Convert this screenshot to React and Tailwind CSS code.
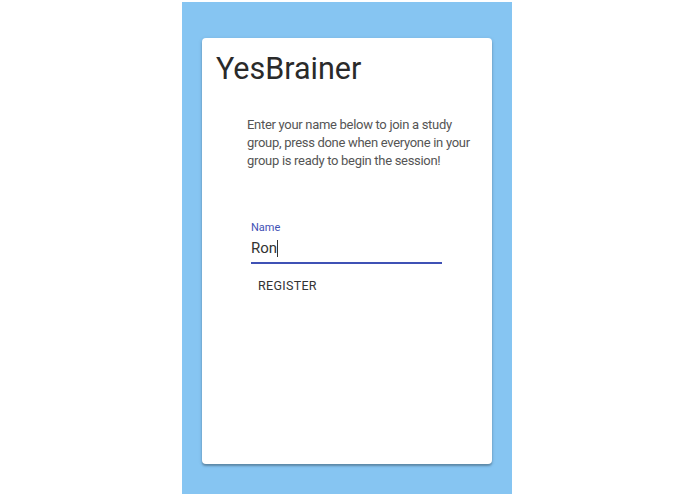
export default function App() {
  return (
    <div className="w-[695px] h-[494px] bg-white pl-[182px]" style={{ fontFamily: 'Roboto, "Liberation Sans", sans-serif' }}>
      <div className="w-[330px] mt-[2px] h-[492px] bg-[#86c5f2] px-5 pt-9">
        <div className="bg-white rounded h-[426px] shadow-[0_2px_2px_rgba(0,0,0,0.25),0_1px_4px_rgba(0,0,0,0.12)] px-[14px] pt-[12px]">
          <h1 className="text-[30.5px] leading-[38px] text-[#2a2a2a] font-normal">YesBrainer</h1>
          <p className="mt-[28px] ml-[31px] w-[232px] text-[13px] tracking-[-0.3px] leading-[18px] text-[#555]">
            Enter your name below to join a study group, press done when everyone in your group is ready to begin the session!
          </p>
          <div className="mt-[51px] ml-[35px] w-[191px]">
            <label className="block text-[11px] leading-[14px] text-[#3f51b5]">Name</label>
            <div className="border-b-2 border-[#3f51b5] pt-[3px] pb-[4px] text-[15px] leading-[20px] text-[#333] flex items-center">
              <span>Ron</span>
              <span className="inline-block w-px h-[17px] bg-[#333]" />
            </div>
          </div>
          <button className="mt-[14px] ml-[42px] text-[12.5px] font-normal tracking-[0.3px] text-[#333] leading-[16px]">REGISTER</button>
        </div>
      </div>
    </div>
  );
}
